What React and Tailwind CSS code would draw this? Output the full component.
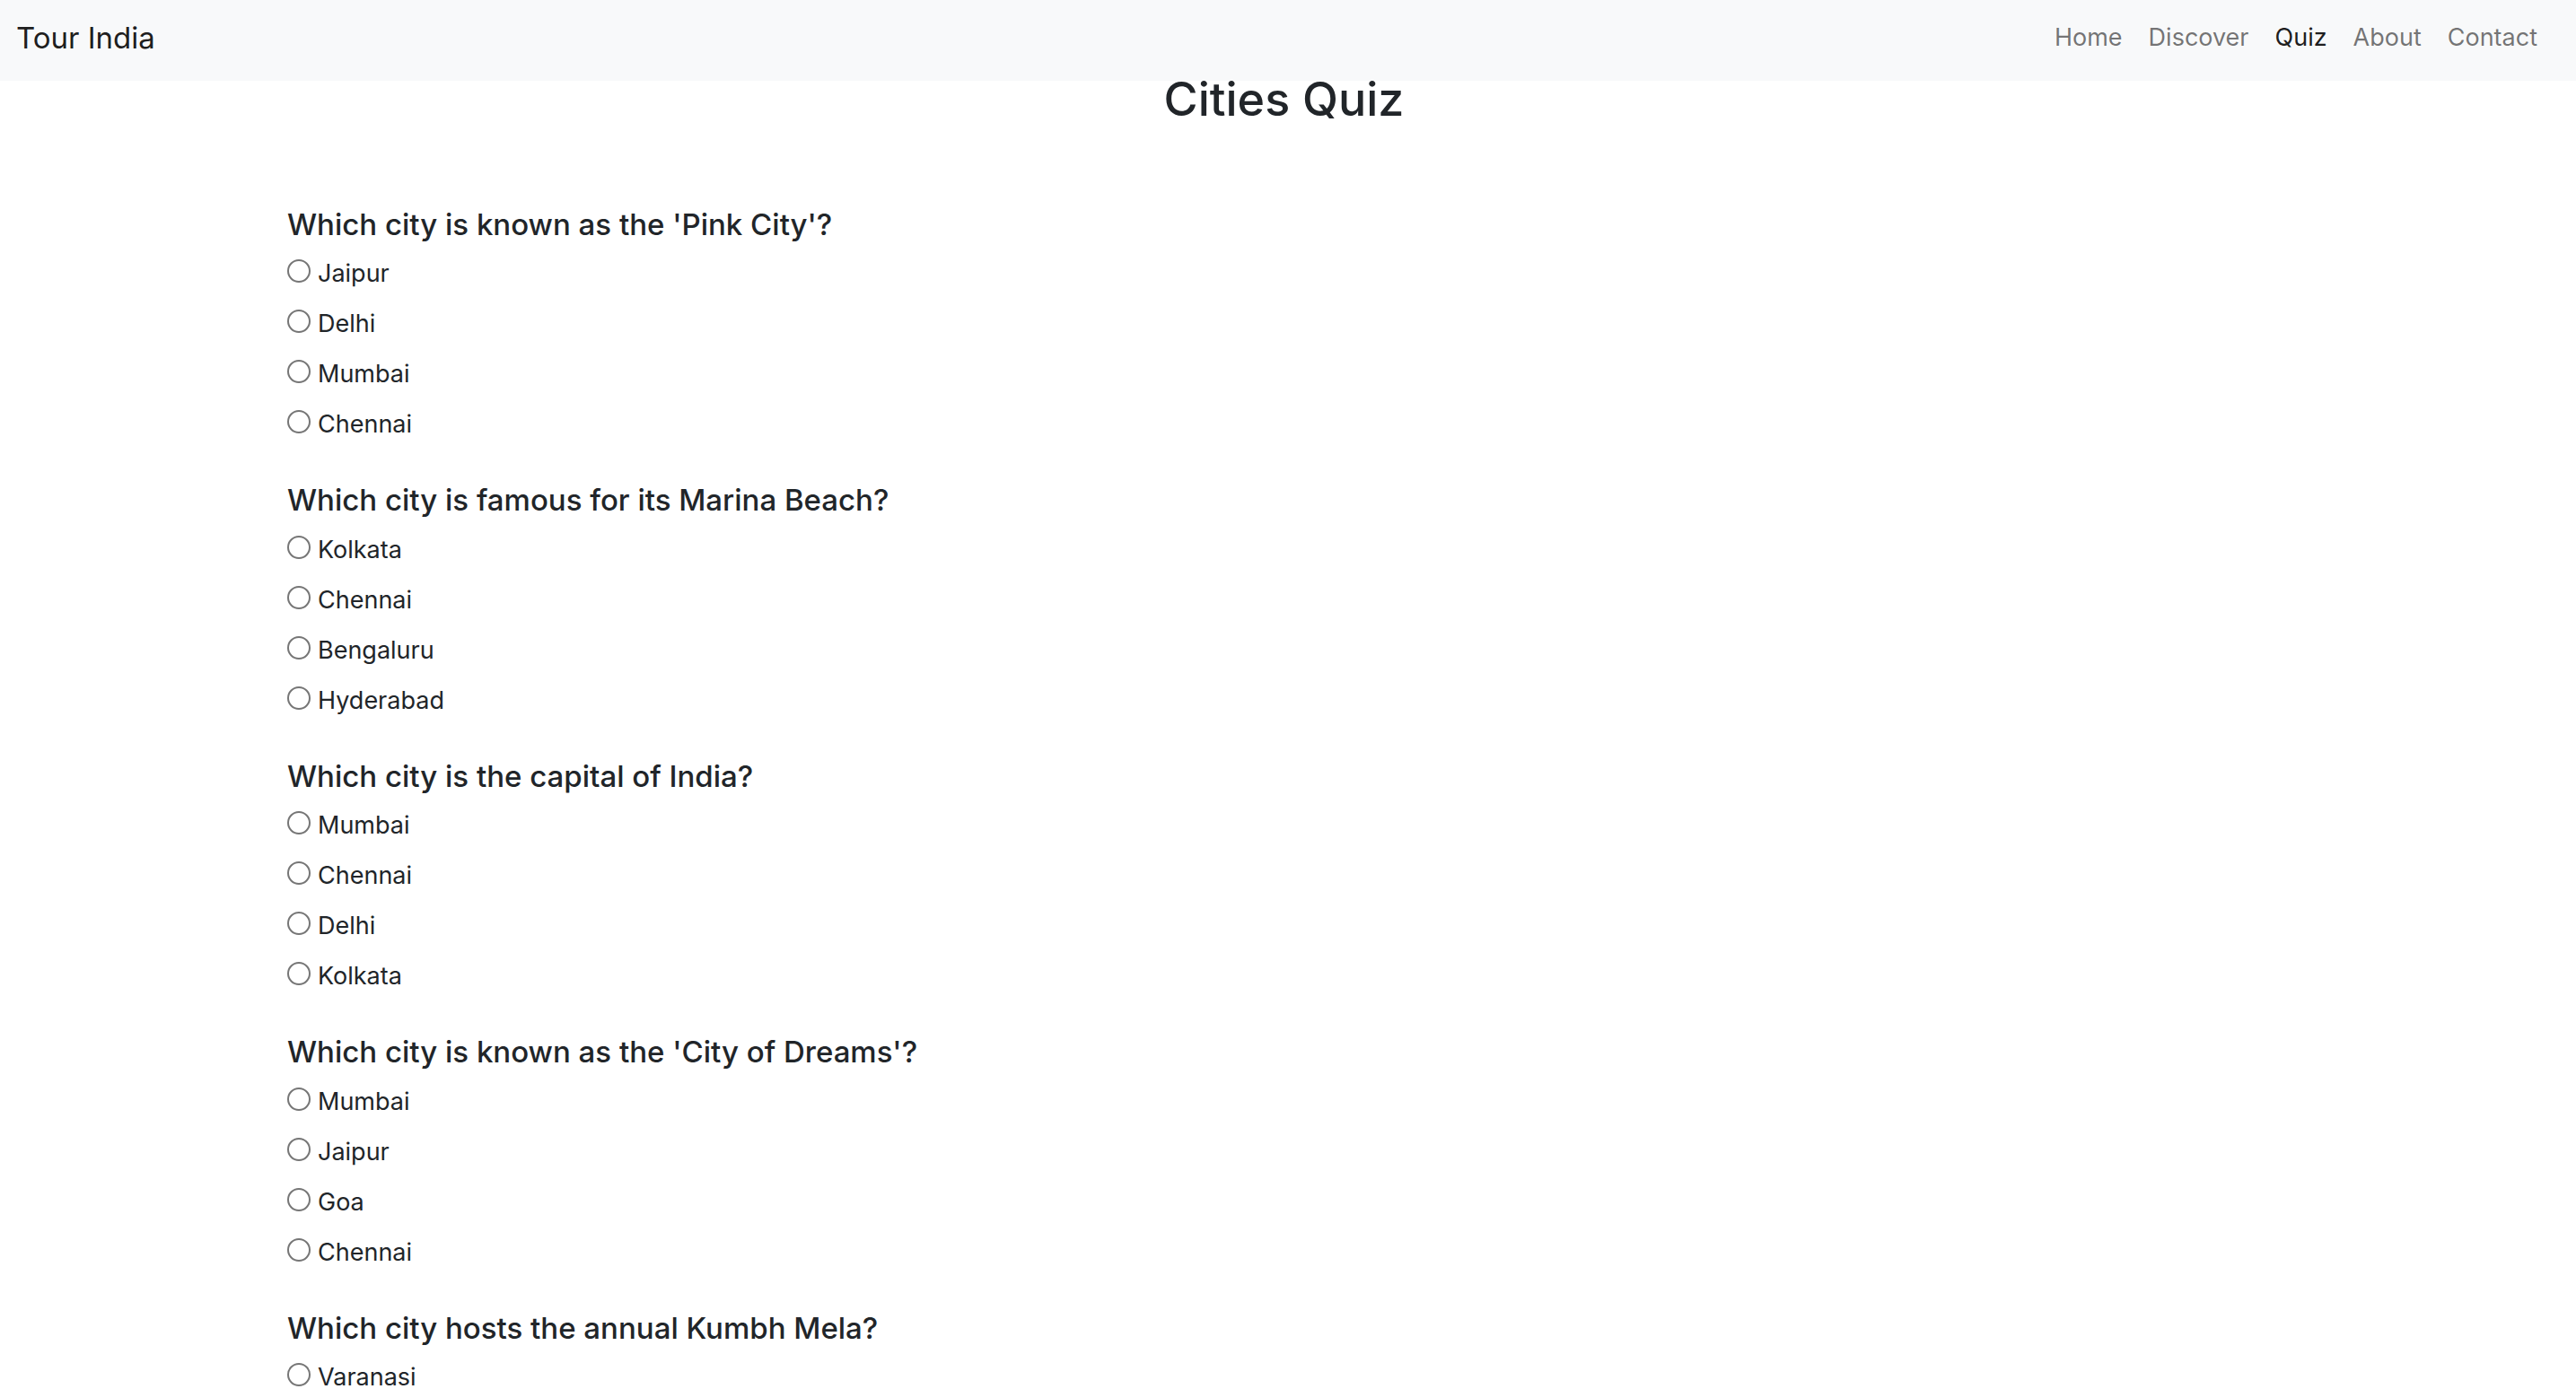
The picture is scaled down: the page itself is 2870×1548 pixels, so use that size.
import { useState } from 'react'

const QUESTIONS = [
  { q: "Which city is known as the 'Pink City'?", options: ['Jaipur', 'Delhi', 'Mumbai', 'Chennai'] },
  { q: 'Which city is famous for its Marina Beach?', options: ['Kolkata', 'Chennai', 'Bengaluru', 'Hyderabad'] },
  { q: 'Which city is the capital of India?', options: ['Mumbai', 'Chennai', 'Delhi', 'Kolkata'] },
  { q: "Which city is known as the 'City of Dreams'?", options: ['Mumbai', 'Jaipur', 'Goa', 'Chennai'] },
  { q: 'Which city hosts the annual Kumbh Mela?', options: ['Varanasi', 'Prayagraj', 'Haridwar', 'Nashik'] },
]

const NAV = ['Home', 'Discover', 'Quiz', 'About', 'Contact']

export default function App() {
  const [answers, setAnswers] = useState({})

  return (
    <div className="min-h-screen bg-white text-[#212529] font-['Inter','Liberation_Sans',sans-serif]">
      {/* Navbar */}
      <nav className="h-[90px] bg-[#f8f9fa] flex items-center justify-between pl-[18px] pr-[43px] pb-[5px]">
        <a className="text-[33px] text-[rgba(0,0,0,0.9)]">Tour India</a>
        <ul className="flex items-center gap-[29px]">
          {NAV.map((n) => (
            <li
              key={n}
              className={`text-[27px] ${n === 'Quiz' ? 'text-[rgba(0,0,0,0.9)]' : 'text-[rgba(0,0,0,0.55)]'}`}
            >
              {n}
            </li>
          ))}
        </ul>
      </nav>

      <div className="w-[2230px] mx-auto">
        <h1 className="mt-[1px] pr-[9px] text-center text-[52px] leading-[40px] font-medium">Cities Quiz</h1>

        <div className="mt-[100px] flex flex-col gap-[45.6px]">
          {QUESTIONS.map((item, qi) => (
            <div key={qi}>
              <h5 className="text-[33px] leading-[38.4px] font-medium mb-[17px]">{item.q}</h5>
              <div className="flex flex-col gap-[17.6px]">
                {item.options.map((opt) => (
                  <label key={opt} className="flex items-start gap-[8px] text-[27px] leading-[38.4px]">
                    <input
                      type="radio"
                      name={`q${qi}`}
                      checked={answers[qi] === opt}
                      onChange={() => setAnswers({ ...answers, [qi]: opt })}
                      className="appearance-none shrink-0 w-[26px] h-[26px] mt-[3px] rounded-full border-2 border-[#767676] bg-white"
                    />
                    <span>{opt}</span>
                  </label>
                ))}
              </div>
            </div>
          ))}
        </div>
      </div>
    </div>
  )
}
